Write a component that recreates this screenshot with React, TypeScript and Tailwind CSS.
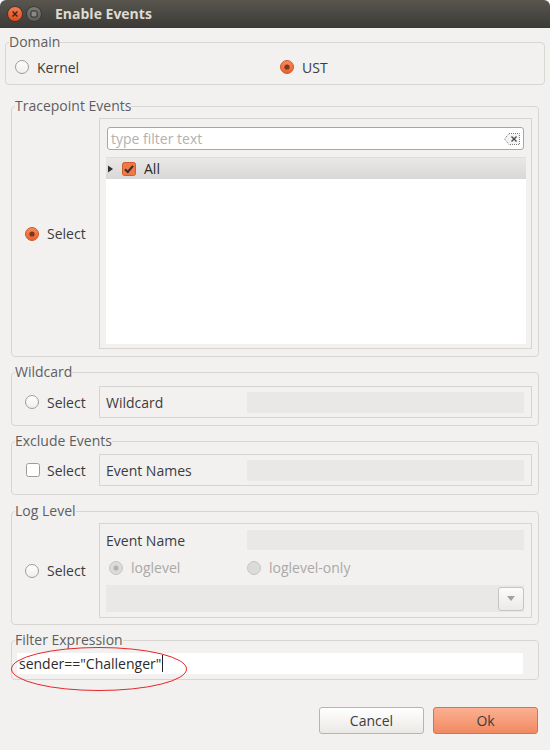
import React from "react";

function Radio({ checked = false, disabled = false }: { checked?: boolean; disabled?: boolean }) {
  if (disabled) {
    return (
      <svg width="14" height="14" viewBox="0 0 14 14" className="shrink-0">
        <circle cx="7" cy="7" r="6.5" fill="#dcdbd9" stroke="#c7c5c2" />
        {checked && <circle cx="7" cy="7" r="2.5" fill="#b3b1ae" />}
      </svg>
    );
  }
  if (checked) {
    return (
      <svg width="14" height="14" viewBox="0 0 14 14" className="shrink-0">
        <defs>
          <linearGradient id="rg" x1="0" y1="0" x2="0" y2="1">
            <stop offset="0" stopColor="#f78c5e" />
            <stop offset="1" stopColor="#e8602d" />
          </linearGradient>
        </defs>
        <circle cx="7" cy="7" r="6.5" fill="url(#rg)" stroke="#cf5a2c" />
        <circle cx="7" cy="7" r="2.6" fill="#7a3620" />
      </svg>
    );
  }
  return (
    <svg width="14" height="14" viewBox="0 0 14 14" className="shrink-0">
      <defs>
        <linearGradient id="ru" x1="0" y1="0" x2="0" y2="1">
          <stop offset="0" stopColor="#ffffff" />
          <stop offset="1" stopColor="#efeeed" />
        </linearGradient>
      </defs>
      <circle cx="7" cy="7" r="6.5" fill="url(#ru)" stroke="#9e9c98" />
    </svg>
  );
}

function CheckBox({ checked = false }: { checked?: boolean }) {
  if (checked) {
    return (
      <svg width="14" height="14" viewBox="0 0 14 14" className="shrink-0">
        <rect x="0.5" y="0.5" width="13" height="13" rx="2" fill="#f07746" stroke="#cf5a2c" />
        <path d="M3 7.2 L5.8 10 L11 3.8" stroke="#2f2f2f" strokeWidth="2" fill="none" />
      </svg>
    );
  }
  return (
    <svg width="14" height="14" viewBox="0 0 14 14" className="shrink-0">
      <rect x="0.5" y="0.5" width="13" height="13" rx="2" fill="#ffffff" stroke="#9e9c98" />
    </svg>
  );
}

function Group({
  title,
  className,
  children,
}: {
  title: string;
  className: string;
  children: React.ReactNode;
}) {
  return (
    <fieldset className={"border border-[#d8d6d3] rounded-[4px] " + className}>
      <legend className="ml-[3px] text-[14px] leading-[16px] text-[#5e5e60]">{title}</legend>
      {children}
    </fieldset>
  );
}

function Field({ className }: { className: string }) {
  return <div className={"bg-[#e9e8e6] " + className} />;
}

export default function App() {
  return (
    <div className="relative w-[550px] h-[750px] bg-white font-['Open_Sans',sans-serif] text-[#3c3c3c] overflow-hidden">
      {/* title bar */}
      <div className="h-[28px] rounded-t-[6px] bg-gradient-to-b from-[#59564f] to-[#3b3a36] flex items-center pl-[7px]">
        <svg width="16" height="16" viewBox="0 0 16 16" className="shrink-0">
          <defs>
            <linearGradient id="cb" x1="0" y1="0" x2="0" y2="1">
              <stop offset="0" stopColor="#f57d52" />
              <stop offset="1" stopColor="#de4a1d" />
            </linearGradient>
          </defs>
          <circle cx="8" cy="8" r="7.5" fill="url(#cb)" stroke="#3a2a22" strokeWidth="0.8" />
          <path d="M5.6 5.6 L10.4 10.4 M10.4 5.6 L5.6 10.4" stroke="#3b261c" strokeWidth="1.4" />
        </svg>
        <svg width="16" height="16" viewBox="0 0 16 16" className="shrink-0 ml-[3px]">
          <defs>
            <linearGradient id="mb" x1="0" y1="0" x2="0" y2="1">
              <stop offset="0" stopColor="#7d7b76" />
              <stop offset="1" stopColor="#5e5c58" />
            </linearGradient>
          </defs>
          <circle cx="8" cy="8" r="7.5" fill="url(#mb)" stroke="#2f2e2b" strokeWidth="0.8" />
          <rect x="5" y="5" width="6" height="6" rx="1" fill="#8c8a85" stroke="#2f2e2b" strokeWidth="1" />
        </svg>
        <div className="ml-[13px] text-[14px] font-bold text-[#dfdbd2] leading-none">Enable Events</div>
      </div>

      {/* body */}
      <div className="bg-[#f2f1f0] h-[722px] flex flex-col pt-[6px]">
        {/* Domain */}
        <Group title="Domain" className="ml-[5px] w-[540px]">
          <div className="h-[34px] flex items-center pl-[9px]">
            <div className="w-[265px] flex items-center gap-[8px]">
              <Radio />
              <span className="text-[14px]">Kernel</span>
            </div>
            <div className="flex items-center gap-[8px]">
              <Radio checked />
              <span className="text-[14px]">UST</span>
            </div>
          </div>
        </Group>

        {/* Tracepoint Events */}
        <Group title="Tracepoint Events" className="ml-[11px] w-[528px] mt-[13px]">
          <div className="flex pt-[4px] pb-[7px]">
            <div className="w-[87px] flex items-center pl-[13px] gap-[8px]">
              <Radio checked />
              <span className="text-[14px]">Select</span>
            </div>
            <div className="w-[433px] border border-[#d6d4d1] pt-[8px] pb-[4px]">
              <div className="ml-[7px] w-[417px] h-[23px] bg-white border border-[#a9a7a3] rounded-[3px] flex items-center pl-[3px] pr-[3px]">
                <span className="text-[14px] text-[#b3b1ae] flex-1">type filter text</span>
                <svg width="16" height="12" viewBox="0 0 16 12" className="shrink-0">
                  <path d="M5 0.5 H15.5 V11.5 H5 L0.5 6 Z" fill="#f4f4f4" stroke="#7d7b78" strokeWidth="1" strokeDasharray="1 1" />
                  <path d="M7.5 3.5 L12.5 8.5 M12.5 3.5 L7.5 8.5" stroke="#4a4a4a" strokeWidth="1.4" />
                </svg>
              </div>
              <div className="ml-[6px] mt-[7px] w-[420px] h-[187px] bg-white">
                <div className="h-[22px] bg-gradient-to-b from-[#e9e8e7] to-[#d9d8d6] border-t border-[#dfdedc] flex items-center">
                  <svg width="8" height="8" viewBox="0 0 8 8" className="ml-[1px] shrink-0">
                    <path d="M1 0.5 L6 4 L1 7.5 Z" fill="#2e2e2e" />
                  </svg>
                  <div className="ml-[7px]">
                    <CheckBox checked />
                  </div>
                  <span className="ml-[8px] text-[14px] text-[#2b2b2b]">All</span>
                </div>
              </div>
            </div>
          </div>
        </Group>

        {/* Wildcard */}
        <Group title="Wildcard" className="ml-[11px] w-[528px] mt-[7px]">
          <div className="flex pt-[6px] pb-[7px]">
            <div className="w-[87px] flex items-center pl-[13px] gap-[8px]">
              <Radio />
              <span className="text-[14px]">Select</span>
            </div>
            <div className="w-[433px] h-[32px] border border-[#d6d4d1] flex items-center pl-[6px]">
              <span className="w-[141px] text-[14px]">Wildcard</span>
              <Field className="w-[277px] h-[21px]" />
            </div>
          </div>
        </Group>

        {/* Exclude Events */}
        <Group title="Exclude Events" className="ml-[11px] w-[528px] mt-[7px]">
          <div className="flex pt-[5px] pb-[8px]">
            <div className="w-[87px] flex items-center pl-[14px] gap-[7px]">
              <CheckBox />
              <span className="text-[14px]">Select</span>
            </div>
            <div className="w-[433px] h-[32px] border border-[#d6d4d1] flex items-center pl-[6px]">
              <span className="w-[141px] text-[14px]">Event Names</span>
              <Field className="w-[277px] h-[21px]" />
            </div>
          </div>
        </Group>

        {/* Log Level */}
        <Group title="Log Level" className="ml-[11px] w-[528px] mt-[8px]">
          <div className="flex pt-[4px] pb-[6px]">
            <div className="w-[87px] flex items-center pl-[13px] gap-[8px]">
              <Radio />
              <span className="text-[14px]">Select</span>
            </div>
            <div className="w-[433px] border border-[#d6d4d1] pt-[6px] pb-[5px] pl-[6px]">
              <div className="h-[20px] flex items-center">
                <span className="w-[141px] text-[14px]">Event Name</span>
                <Field className="w-[277px] h-[20px]" />
              </div>
              <div className="h-[35px] flex items-center">
                <div className="w-[141px] flex items-center pl-[3px] gap-[8px]">
                  <Radio checked disabled />
                  <span className="text-[14px] text-[#aba9a6]">loglevel</span>
                </div>
                <div className="flex items-center gap-[8px]">
                  <Radio disabled />
                  <span className="text-[14px] text-[#aba9a6]">loglevel-only</span>
                </div>
              </div>
              <div className="h-[27px] w-[418px] bg-[#e9e8e6] flex items-center justify-end">
                <div className="w-[26px] h-[24px] rounded-[3px] border border-[#c6c4c1] bg-gradient-to-b from-[#fbfbfa] to-[#eceae8] flex items-center justify-center">
                  <svg width="8" height="5" viewBox="0 0 8 5">
                    <path d="M0 0 H8 L4 5 Z" fill="#a3a19e" />
                  </svg>
                </div>
              </div>
            </div>
          </div>
        </Group>

        {/* Filter Expression */}
        <Group title="Filter Expression" className="ml-[11px] w-[528px] mt-[7px]">
          <div className="pt-[5px] pb-[5px] pl-[5px]">
            <div className="w-[506px] h-[21px] bg-white flex items-center pl-[2px]">
              <span className="text-[14px] text-[#2b2b2b]">sender=="Challenger"</span>
              <span className="w-px h-[17px] bg-[#222] ml-[1px]" />
            </div>
          </div>
        </Group>

        {/* Buttons */}
        <div className="flex justify-end gap-[9px] pr-[12px] mt-[27px]">
          <button className="w-[105px] h-[27px] rounded-[3px] border border-[#b8b5b1] bg-gradient-to-b from-[#ffffff] to-[#ebe9e6] text-[14px] text-[#3c3c3c]">
            Cancel
          </button>
          <button className="w-[105px] h-[27px] rounded-[3px] border border-[#d0764f] bg-gradient-to-b from-[#fbb091] to-[#f08a62] text-[14px] text-[#3c3c3c]">
            Ok
          </button>
        </div>
      </div>

      {/* red annotation ellipse */}
      <svg className="absolute left-[10px] top-[646px] pointer-events-none" width="178" height="46" viewBox="0 0 178 46">
        <ellipse cx="89" cy="23" rx="87.5" ry="21.5" fill="none" stroke="#e5262a" strokeWidth="1" />
      </svg>
    </div>
  );
}
